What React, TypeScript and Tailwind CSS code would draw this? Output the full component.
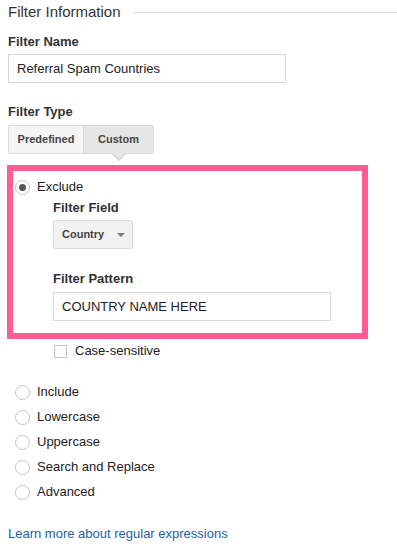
const options = ['Include', 'Lowercase', 'Uppercase', 'Search and Replace', 'Advanced'];

function Radio({ checked }: { checked?: boolean }) {
    return (
        <span className="flex h-[15px] w-[15px] shrink-0 items-center justify-center rounded-full border border-[#c4c4c4] bg-white">
            {checked && <span className="h-[7px] w-[7px] rounded-full bg-[#555]" />}
        </span>
    );
}

export default function App() {
    return (
        <div className="w-[397px] h-[554px] overflow-hidden bg-white pl-2 text-[#222] font-['Liberation_Sans',Arial,sans-serif]">
            {/* Section heading */}
            <div className="flex items-center pt-[3px]">
                <span className="text-[15px] leading-[18px] text-[#333]">Filter Information</span>
                <div className="ml-3 h-px flex-1 bg-[#ddd]" />
            </div>

            {/* Filter name */}
            <div className="mt-[13px] text-[13px] font-bold leading-[16px] text-[#333]">Filter Name</div>
            <div className="mt-[4px] flex h-[29px] w-[278px] items-center border border-[#d9d9d9] px-[8px] text-[13px] text-[#222]">
                Referral Spam Countries
            </div>

            {/* Filter type */}
            <div className="mt-[21px] text-[13px] font-bold leading-[16px] text-[#333]">Filter Type</div>
            <div className="mt-[5px] flex h-[29px] w-[146px] rounded-[2px] border border-[#dcdcdc] text-[11px] font-bold text-[#444]">
                <div className="flex w-[74px] items-center justify-center bg-[#f5f5f5]">Predefined</div>
                <div className="relative flex flex-1 items-center justify-center border-l border-[#dcdcdc] bg-[#e6e6e6]">
                    Custom
                    <span className="absolute -bottom-[6px] left-1/2 h-[10px] w-[10px] -translate-x-1/2 rotate-45 border-b border-r border-[#d4d4d4] bg-[#e6e6e6]" />
                </div>
            </div>

            {/* Highlighted exclude block */}
            <div className="mt-[11px] w-[361px] -ml-px border-[6px] border-[#ff5c93] pb-[12px] pl-[2px] pt-[7px]">
                <label className="flex items-center gap-[7px] text-[13px] leading-[18px]">
                    <Radio checked />
                    Exclude
                </label>
                <div className="pl-[38px]">
                    <div className="mt-[4px] text-[13px] font-bold leading-[16px] text-[#333]">Filter Field</div>
                    <div className="mt-[4px] flex h-[29px] w-[80px] items-center justify-between rounded-[2px] border border-[#dcdcdc] bg-[#f2f2f2] pl-[8px] pr-[6px] text-[11px] font-bold text-[#444]">
                        Country
                        <svg width="8" height="4" viewBox="0 0 8 4" className="mr-[1px]">
                            <path d="M0 0h8L4 4z" fill="#777" />
                        </svg>
                    </div>
                    <div className="mt-[22px] text-[13px] font-bold leading-[16px] text-[#333]">Filter Pattern</div>
                    <div className="mt-[5px] flex h-[29px] w-[278px] items-center border border-[#d9d9d9] px-[8px] text-[13px] text-[#222]">
                        COUNTRY NAME HERE
                    </div>
                </div>
            </div>

            <label className="ml-[46px] mt-[3px] flex items-center gap-[8px] text-[13px] leading-[18px]">
                <span className="h-[13px] w-[13px] border border-[#c4c4c4] bg-white" />
                Case-sensitive
            </label>

            {/* Other filter types */}
            <div className="mt-[23px] flex flex-col gap-[7px] pl-[7px]">
                {options.map(option => (
                    <label key={option} className="flex items-center gap-[7px] text-[13px] leading-[18px]">
                        <Radio />
                        {option}
                    </label>
                ))}
            </div>

            <a className="mt-[24px] block text-[13px] leading-[18px] text-[#1e5fa0]">Learn more about regular expressions</a>
        </div>
    );
}
